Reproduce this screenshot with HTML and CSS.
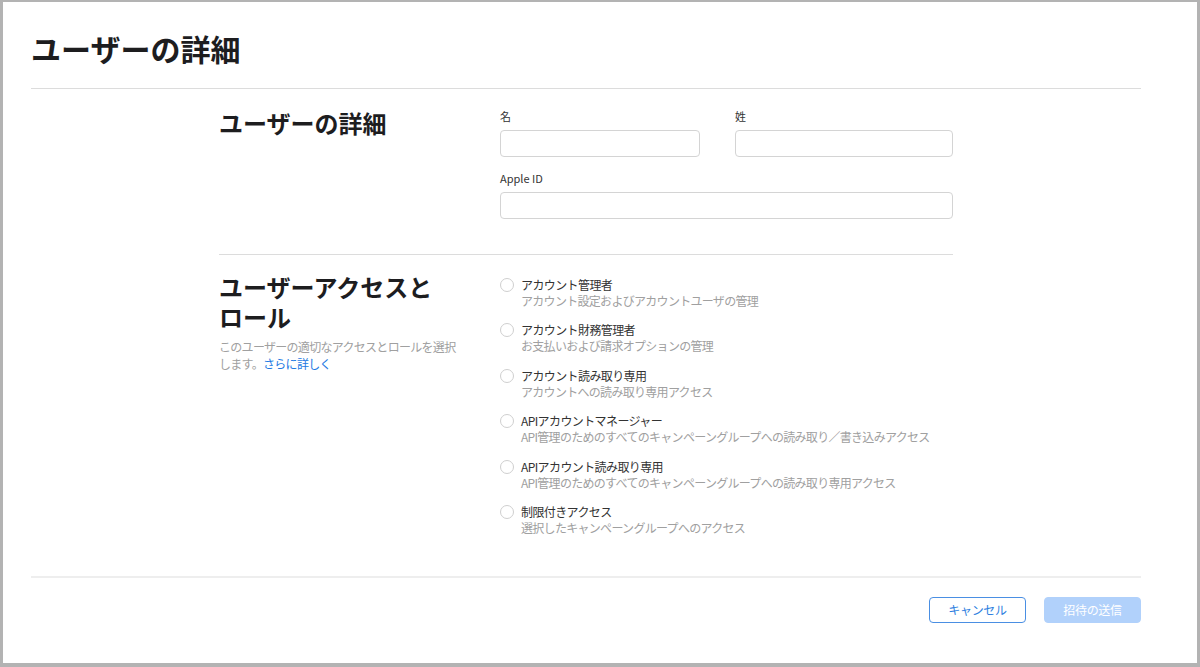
FILE: index.html
```html
<!DOCTYPE html>
<html lang="ja">
<head>
<meta charset="utf-8">
<link rel="stylesheet" href="styles.css">
</head>
<body>
<div class="panel">
  <div class="wrap">
    <header class="page-head">
      <h1 class="page-title">ユーザーの詳細</h1>
    </header>
    <main class="content">
      <section class="section sec-details">
        <div class="sec-left">
          <h2 class="sec-title">ユーザーの詳細</h2>
        </div>
        <div class="sec-right">
          <div class="name-grid">
            <div class="field">
              <label class="label">名</label>
              <div class="input"></div>
            </div>
            <div class="field">
              <label class="label">姓</label>
              <div class="input"></div>
            </div>
          </div>
          <div class="field field-id">
            <label class="label">Apple ID</label>
            <div class="input"></div>
          </div>
        </div>
      </section>
      <section class="section sec-access">
        <div class="sec-left">
          <h2 class="sec-title">ユーザーアクセスと<br>ロール</h2>
          <p class="sec-desc">このユーザーの適切なアクセスとロールを選択<br>します。<a class="link" href="#">さらに詳しく</a></p>
        </div>
        <div class="sec-right options">
          <div class="option"><span class="radio"></span><div class="opt-text"><div class="opt-title">アカウント管理者</div><div class="opt-sub">アカウント設定およびアカウントユーザの管理</div></div></div>
          <div class="option"><span class="radio"></span><div class="opt-text"><div class="opt-title">アカウント財務管理者</div><div class="opt-sub">お支払いおよび請求オプションの管理</div></div></div>
          <div class="option"><span class="radio"></span><div class="opt-text"><div class="opt-title">アカウント読み取り専用</div><div class="opt-sub">アカウントへの読み取り専用アクセス</div></div></div>
          <div class="option"><span class="radio"></span><div class="opt-text"><div class="opt-title">APIアカウントマネージャー</div><div class="opt-sub">API管理のためのすべてのキャンペーングループへの読み取り／書き込みアクセス</div></div></div>
          <div class="option"><span class="radio"></span><div class="opt-text"><div class="opt-title">APIアカウント読み取り専用</div><div class="opt-sub">API管理のためのすべてのキャンペーングループへの読み取り専用アクセス</div></div></div>
          <div class="option"><span class="radio"></span><div class="opt-text"><div class="opt-title">制限付きアクセス</div><div class="opt-sub">選択したキャンペーングループへのアクセス</div></div></div>
        </div>
      </section>
    </main>
    <footer class="footer">
      <button class="btn btn-cancel">キャンセル</button>
      <button class="btn btn-send">招待の送信</button>
    </footer>
  </div>
</div>
</body>
</html>
```
FILE: styles.css
```css
* { box-sizing: border-box; }
html, body { margin: 0; padding: 0; }
body {
  background: #b3b3b3;
  font-family: "Noto Sans CJK JP", "Noto Sans", sans-serif;
  color: #1d1d1f;
  height: 667px;
  overflow: hidden;
}
.panel {
  background: #fff;
  margin: 2px 3px 0 3px;
  height: 661px;
}
.wrap {
  margin: 0 56px 0 28px;
}
.page-head {
  padding: 28px 0 22px 0;
  border-bottom: 1px solid #dcdcdc;
}
.page-title {
  margin: 0;
  font-size: 30px;
  line-height: 36px;
  font-weight: 700;
  color: #1d1d1f;
  letter-spacing: 0;
}
.content {
  margin-left: 188px;
  width: 734px;
}
.section {
  display: flex;
}
.sec-details {
  padding: 20px 0 35px 0;
  border-bottom: 1px solid #dcdcdc;
}
.sec-access {
  padding: 20px 0 40px 0;
}
.sec-left {
  width: 281px;
  flex: none;
}
.sec-right {
  flex: 1;
}
.sec-title {
  margin: 0;
  font-size: 24px;
  line-height: 30px;
  font-weight: 700;
  color: #1d1d1f;
}
.sec-details .sec-title { margin-top: -1px; }
.sec-access .sec-title { margin-top: -3px; line-height: 29.5px; }
.sec-desc {
  margin: 7px 0 0 0;
  font-size: 12px;
  line-height: 17px;
  color: #a0a0a0;
  letter-spacing: -0.7px;
}
.link {
  color: #1d7ae3;
  text-decoration: none;
}
.name-grid {
  display: grid;
  grid-template-columns: 200px 1fr;
  column-gap: 35px;
}
.field { display: flex; flex-direction: column; }
.label {
  font-size: 11px;
  line-height: 15px;
  color: #333;
  margin-bottom: 6px;
}
.field-id { margin-top: 14px; }
.input {
  height: 27px;
  border: 1px solid #d4d4d4;
  border-radius: 4px;
  background: #fff;
}
.options {
  display: flex;
  flex-direction: column;
  gap: 13.4px;
  padding-top: 2px;
}
.option {
  display: flex;
  align-items: flex-start;
}
.radio {
  width: 14px;
  height: 14px;
  border: 1px solid #cfcfcf;
  border-radius: 50%;
  margin-top: 1px;
  margin-right: 7px;
  flex: none;
}
.opt-title {
  font-size: 12px;
  line-height: 16px;
  color: #333;
  letter-spacing: -0.6px;
}
.opt-sub {
  font-size: 12px;
  line-height: 16px;
  color: #a0a0a0;
  letter-spacing: -0.7px;
}
.footer {
  border-top: 2px solid #eeeeee;
  padding-top: 19px;
  display: flex;
  justify-content: flex-end;
  gap: 18px;
}
.btn {
  height: 26px;
  width: 97px;
  border-radius: 4px;
  font-family: "Noto Sans CJK JP", "Noto Sans", sans-serif;
  font-size: 12px;
  line-height: 16px;
  padding: 0;
  letter-spacing: -0.3px;
}
.btn-cancel {
  background: #fff;
  border: 1px solid #4a8fe3;
  color: #2f7fe0;
}
.btn-send {
  background: #b1d1fb;
  border: 1px solid #b1d1fb;
  color: #fff;
}
```
